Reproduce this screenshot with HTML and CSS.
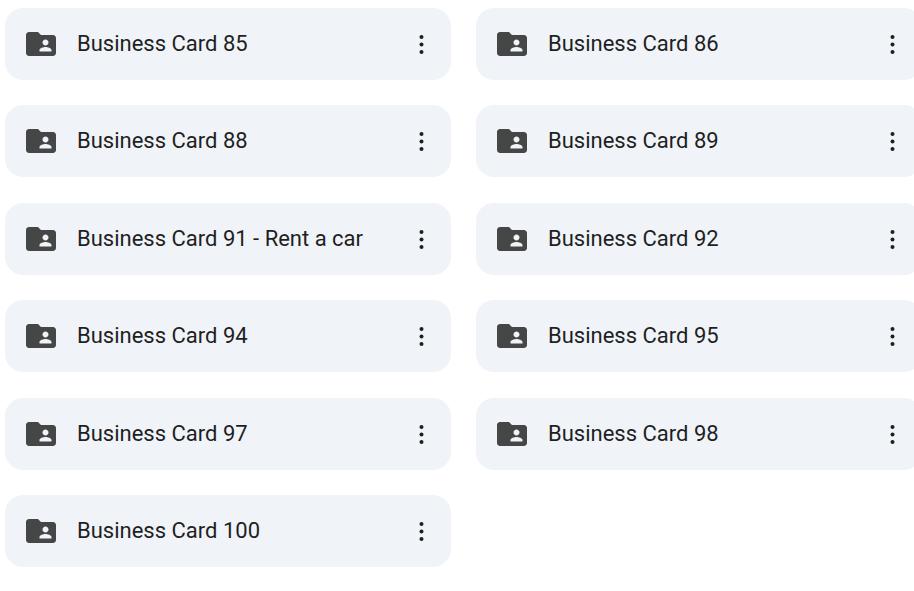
FILE: index.html
```
<!DOCTYPE html>
<html lang="en">
<head>
<meta charset="utf-8">
<title>Folders</title>
<link rel="stylesheet" href="styles.css">
</head>
<body>
<!-- shared icons -->
<svg class="defs" aria-hidden="true">
  <symbol id="folder" viewBox="0 0 24 24">
    <path d="M20 6h-8l-2-2H4c-1.100 0-2 .9-2 2v12c0 1.100.9 2 2 2h16c1.100 0 2-.9 2-2V8c0-1.100-.9-2-2-2zm-5 3c1.100 0 2 .9 2 2s-.9 2-2 2-2-.9-2-2 .9-2 2-2zm4 8h-8v-1c0-1.330 2.670-2 4-2s4 .67 4 2v1z"/>
  </symbol>
  <symbol id="more" viewBox="0 0 5 20">
    <circle cx="2.500" cy="3" r="2"/>
    <circle cx="2.500" cy="10.500" r="2"/>
    <circle cx="2.500" cy="18" r="2"/>
  </symbol>
</svg>
<ul class="folders">
  <li class="card">
    <svg class="icon"><use href="#folder"/></svg>
    <span class="name">Business Card 85</span>
    <button class="menu" type="button" aria-label="More actions"><svg class="dots"><use href="#more"/></svg></button>
  </li>
  <li class="card">
    <svg class="icon"><use href="#folder"/></svg>
    <span class="name">Business Card 86</span>
    <button class="menu" type="button" aria-label="More actions"><svg class="dots"><use href="#more"/></svg></button>
  </li>
  <li class="card">
    <svg class="icon"><use href="#folder"/></svg>
    <span class="name">Business Card 88</span>
    <button class="menu" type="button" aria-label="More actions"><svg class="dots"><use href="#more"/></svg></button>
  </li>
  <li class="card">
    <svg class="icon"><use href="#folder"/></svg>
    <span class="name">Business Card 89</span>
    <button class="menu" type="button" aria-label="More actions"><svg class="dots"><use href="#more"/></svg></button>
  </li>
  <li class="card">
    <svg class="icon"><use href="#folder"/></svg>
    <span class="name">Business Card 91 - Rent a car</span>
    <button class="menu" type="button" aria-label="More actions"><svg class="dots"><use href="#more"/></svg></button>
  </li>
  <li class="card">
    <svg class="icon"><use href="#folder"/></svg>
    <span class="name">Business Card 92</span>
    <button class="menu" type="button" aria-label="More actions"><svg class="dots"><use href="#more"/></svg></button>
  </li>
  <li class="card">
    <svg class="icon"><use href="#folder"/></svg>
    <span class="name">Business Card 94</span>
    <button class="menu" type="button" aria-label="More actions"><svg class="dots"><use href="#more"/></svg></button>
  </li>
  <li class="card">
    <svg class="icon"><use href="#folder"/></svg>
    <span class="name">Business Card 95</span>
    <button class="menu" type="button" aria-label="More actions"><svg class="dots"><use href="#more"/></svg></button>
  </li>
  <li class="card">
    <svg class="icon"><use href="#folder"/></svg>
    <span class="name">Business Card 97</span>
    <button class="menu" type="button" aria-label="More actions"><svg class="dots"><use href="#more"/></svg></button>
  </li>
  <li class="card">
    <svg class="icon"><use href="#folder"/></svg>
    <span class="name">Business Card 98</span>
    <button class="menu" type="button" aria-label="More actions"><svg class="dots"><use href="#more"/></svg></button>
  </li>
  <li class="card">
    <svg class="icon"><use href="#folder"/></svg>
    <span class="name">Business Card 100</span>
    <button class="menu" type="button" aria-label="More actions"><svg class="dots"><use href="#more"/></svg></button>
  </li>
</ul>
</body>
</html>
```
FILE: styles.css
```
* {
	box-sizing: border-box;
}
body {
	margin: 0;
	background: #fff;
	color: #1f1f1f;
	font-family: Roboto, "Liberation Sans", sans-serif;
	overflow-x: hidden;
}
.defs {
	display: none;
}
/* the right column runs a little past the window edge */
.folders {
	display: grid;
	grid-template-columns: 1fr 1fr;
	column-gap: 25px;
	align-content: space-between;
	min-height: 100vh;
	margin: 0 -8px 0 5px;
	padding: 8px 0 24px;
	list-style: none;
}
.card {
	display: flex;
	align-items: center;
	height: 72px;
	padding: 0 14px 0 18px;
	border-radius: 18px;
	background: #f0f4f9;
}
.icon {
	flex: none;
	width: 36px;
	height: 36px;
	margin-right: 18px;
	fill: #444746;
}
.name {
	flex: 1;
	min-width: 0;
	font-size: 22px;
	line-height: 28px;
	white-space: nowrap;
	overflow: hidden;
	text-overflow: ellipsis;
}
.menu {
	display: flex;
	align-items: center;
	justify-content: center;
	width: 31px;
	height: 40px;
	padding: 0;
	border: 0;
	background: none;
	cursor: pointer;
}
.dots {
	width: 5px;
	height: 20px;
	fill: #1f1f1f;
}
```
